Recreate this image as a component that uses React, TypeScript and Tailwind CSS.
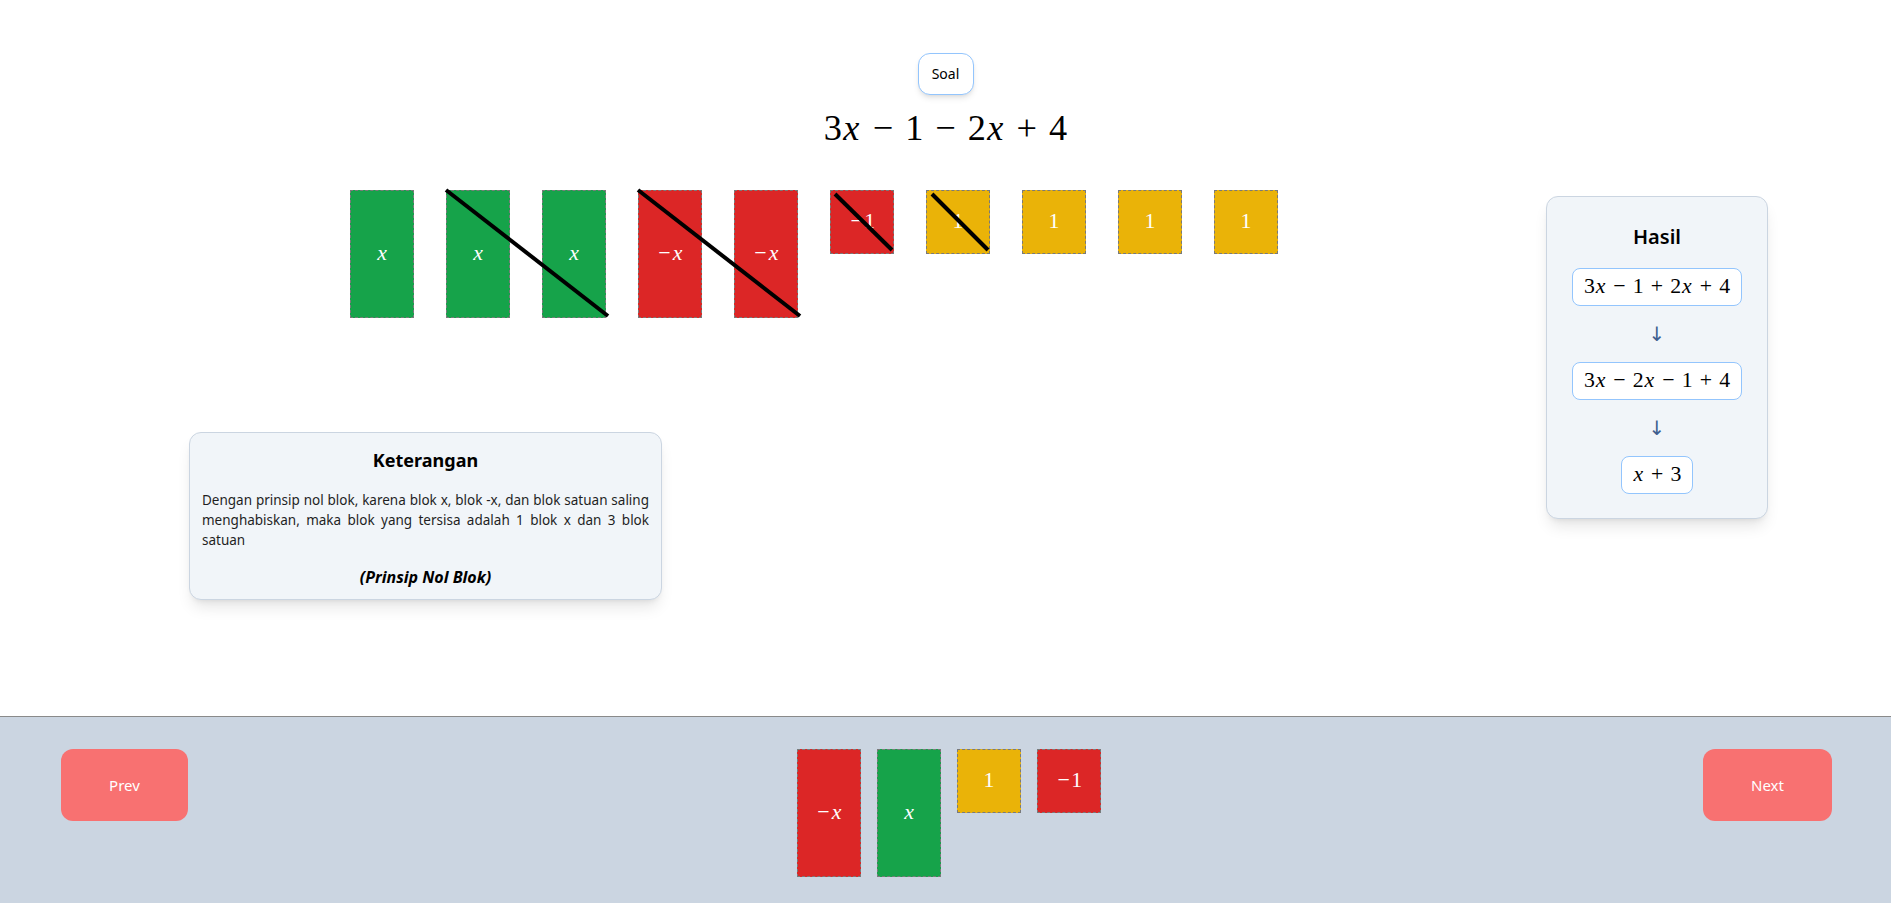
import React from "react";

const sans = "font-['Noto_Sans','Open_Sans',sans-serif]";
const serif = "font-['Liberation_Serif','DejaVu_Serif',serif]";

function X() {
  return <span className="inline-block w-[0.52em] text-center italic">x</span>;
}

function Op({ c }: { c: string }) {
  return <span className="mx-[0.222em] inline-block w-[0.778em] text-center">{c}</span>;
}

function Neg() {
  return <span className="inline-block w-[0.7em] text-center">−</span>;
}

type Kind = "x" | "-x" | "1" | "-1";

function Block({ kind }: { kind: Kind }) {
  const tall = kind === "x" || kind === "-x";
  const bg = kind === "x" ? "bg-[#16a34a]" : kind === "1" ? "bg-[#eab308]" : "bg-[#dc2626]";
  return (
    <div
      className={`flex w-[64px] shrink-0 items-center justify-center border border-dashed border-[#7a7a7a] text-white ${bg} ${
        tall ? "h-[128px]" : "h-[64px]"
      } ${serif} text-[21.8px] leading-none`}
    >
      {kind === "-x" || kind === "-1" ? <Neg /> : null}
      {kind === "x" || kind === "-x" ? <X /> : <span>1</span>}
    </div>
  );
}

function ResultBox({ children }: { children: React.ReactNode }) {
  return (
    <div
      className={`flex h-[38px] items-center rounded-lg border border-[#93c5fd] bg-white px-[11px] ${serif} text-[21.8px] leading-none text-black`}
    >
      {children}
    </div>
  );
}

function Arrow() {
  return <div className="font-['DejaVu_Sans',sans-serif] text-xl leading-7 text-[#3f5f8f]">↓</div>;
}

export default function App() {
  const row: Kind[] = ["x", "x", "x", "-x", "-x", "-1", "1", "1", "1", "1"];
  const tray: Kind[] = ["-x", "x", "1", "-1"];

  return (
    <div className={`flex h-screen flex-col bg-white ${sans}`}>
      <main className="flex-1">
        <div className="flex flex-col items-center pt-[53px]">
          <button className="h-[42px] w-[56px] rounded-xl border border-[#93c5fd] bg-white text-sm text-black shadow-md">
            Soal
          </button>
          <div className={`mt-[13px] ${serif} text-[36.3px] leading-[40px] text-black`}>
            3<X />
            <Op c="−" />1<Op c="−" />2<X />
            <Op c="+" />4
          </div>
        </div>

        <div className="mt-[42px] flex items-start justify-between">
          <div className="flex flex-col pl-[189px]">
            <div className="relative ml-[161px] flex items-start gap-8">
              {row.map((k, i) => (
                <Block key={i} kind={k} />
              ))}
              <svg
                className="pointer-events-none absolute left-0 top-0 overflow-visible"
                width="928"
                height="128"
              >
                <g stroke="black" strokeWidth="4">
                  <line x1="96" y1="0" x2="258" y2="126" />
                  <line x1="288" y1="0" x2="450" y2="126" />
                  <line x1="485" y1="4" x2="542" y2="60" />
                  <line x1="582" y1="4" x2="638" y2="60" />
                </g>
              </svg>
            </div>

            <div className="mt-[114px] w-[473px] rounded-xl border border-[#cbd5e1] bg-[#f1f5f9] px-3 pb-[12px] pt-[13px] shadow-lg">
              <h2 className="text-center text-lg font-bold leading-7 text-black">Keterangan</h2>
              <p className="mt-4 text-justify text-[13.5px] leading-5 text-[#1f1f1f]">
                Dengan prinsip nol blok, karena blok x, blok -x, dan blok satuan saling menghabiskan, maka blok
                yang tersisa adalah 1 blok x dan 3 blok satuan
              </p>
              <p className="mt-[17px] text-center text-base font-bold italic leading-5 text-black">
                (Prinsip Nol Blok)
              </p>
            </div>
          </div>

          <div className="mr-[123px] mt-[6px] flex w-[222px] flex-col items-center gap-[14px] rounded-xl border border-[#cbd5e1] bg-[#f1f5f9] px-6 pb-6 pt-[26px] shadow-lg">
            <h2 className="mb-[3px] text-xl font-semibold leading-7 text-black">Hasil</h2>
            <ResultBox>
              3<X />
              <Op c="−" />1<Op c="+" />2<X />
              <Op c="+" />4
            </ResultBox>
            <Arrow />
            <ResultBox>
              3<X />
              <Op c="−" />2<X />
              <Op c="−" />1<Op c="+" />4
            </ResultBox>
            <Arrow />
            <ResultBox>
              <X />
              <Op c="+" />3
            </ResultBox>
          </div>
        </div>
      </main>

      <footer className="flex h-[187px] shrink-0 items-start justify-between border-t border-[#8a8a8a] bg-[#cbd5e1] pl-[61px] pr-[59px] pt-[32px]">
        <button className="h-[72px] w-[127px] rounded-xl bg-[#f87171] text-[15px] text-white">Prev</button>
        <div className="ml-[7px] flex items-start gap-4">
          {tray.map((k, i) => (
            <Block key={i} kind={k} />
          ))}
        </div>
        <button className="h-[72px] w-[129px] rounded-xl bg-[#f87171] text-[15px] text-white">Next</button>
      </footer>
    </div>
  );
}
